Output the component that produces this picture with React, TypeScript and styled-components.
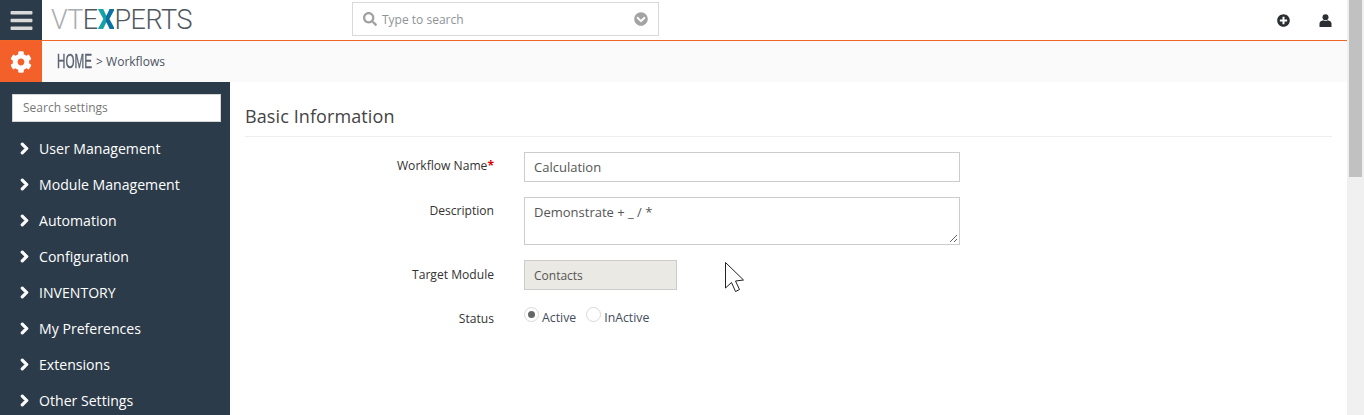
import React from "react";
import styled, { createGlobalStyle } from "styled-components";
import {
  FaBars,
  FaCog,
  FaChevronRight,
  FaSearch,
  FaChevronCircleDown,
  FaPlusCircle,
} from "react-icons/fa";

const GlobalStyle = createGlobalStyle`
  html, body {
    margin: 0;
    padding: 0;
    height: 415px;
    overflow: hidden;
    background: #fff;
    font-family: "Open Sans", "Liberation Sans", sans-serif;
    color: #333;
  }
  * { box-sizing: border-box; }
`;

const Page = styled.div`
  position: relative;
  display: flex;
  width: 1364px;
  height: 415px;
  overflow: hidden;
`;
const Main = styled.div`
  flex: 1;
  display: flex;
  flex-direction: column;
  min-width: 0;
`;
const TopBar = styled.div`
  display: flex;
  align-items: center;
  height: 41px;
  flex: none;
  border-bottom: 1px solid #f26529;
  background: #fff;
`;
const MenuButton = styled.div`
  width: 42px;
  height: 40px;
  background: #2c3b49;
  color: #d9d9d9;
  display: flex;
  align-items: center;
  justify-content: center;
  font-size: 25px;
`;
const Logo = styled.div`
  width: 310px;
  padding-left: 9px;
  font-family: Roboto, "Liberation Sans", sans-serif;
  font-weight: 300;
  font-size: 27px;
  line-height: 38px;
  letter-spacing: -0.5px;
  color: #50585e;
  white-space: nowrap;
`;
const LogoLight = styled.span`
  color: #a9adb0;
`;
const LogoMark = styled.span`
  font-weight: 900;
  background: linear-gradient(90deg, #19a6a0 0%, #12a0a8 50%, #0b6fa0 52%, #0a73a5 100%);
  -webkit-background-clip: text;
  background-clip: text;
  color: transparent;
`;
const SearchBox = styled.div`
  width: 307px;
  height: 34px;
  margin-bottom: 3px;
  border: 1px solid #d9d9d9;
  display: flex;
  align-items: center;
  padding: 0 10px;
  color: #8e9398;
  font-size: 12px;
`;
const SearchIcon = styled(FaSearch)`
  font-size: 14px;
  color: #a0a0a0;
  margin-right: 5px;
`;
const SearchText = styled.span`
  flex: 1;
  padding-top: 1px;
`;
const CaretIcon = styled(FaChevronCircleDown)`
  font-size: 14px;
  color: #a3a3a3;
`;
const TopActions = styled.div`
  margin-left: auto;
  display: flex;
  align-items: center;
  gap: 29px;
  padding-right: 15px;
  color: #2b2f33;
  font-size: 13px;
`;
const UserGlyph = styled.svg`
  width: 13px;
  height: 13px;
  fill: currentColor;
`;
const CrumbBar = styled.div`
  display: flex;
  align-items: center;
  height: 41px;
  flex: none;
  background: #fafafa;
`;
const GearBox = styled.div`
  width: 42px;
  height: 41px;
  background: #f4602a;
  color: #fff;
  display: flex;
  align-items: center;
  justify-content: center;
  font-size: 22px;
`;
const Crumbs = styled.div`
  margin-left: 15px;
  display: flex;
  align-items: center;
  font-size: 12px;
  color: #4a5360;
`;
const HomeLink = styled.span`
  font-family: "Liberation Sans", sans-serif;
  font-size: 19.5px;
  color: #5b6372;
  -webkit-text-stroke: 0.4px #5b6372;
  transform: scaleX(0.6);
  transform-origin: left center;
  width: 36px;
  white-space: nowrap;
`;
const Body = styled.div`
  flex: 1;
  display: flex;
  min-height: 0;
`;
const Sidebar = styled.div`
  width: 230px;
  flex: none;
  background: #2c3b49;
  padding: 12px 9px 0 12px;
`;
const SideSearch = styled.div`
  height: 28px;
  background: #fff;
  border: 1px solid #d5d5d5;
  padding-left: 10px;
  line-height: 25px;
  font-size: 12px;
  color: #777;
  margin-bottom: 8px;
`;
const SideItem = styled.div`
  height: 36px;
  display: flex;
  align-items: center;
  margin-left: 8px;
  color: #fff;
  font-size: 14.1px;
  white-space: nowrap;
`;
const SideChevron = styled(FaChevronRight)`
  width: 9px;
  height: 13px;
  margin-right: 10px;
  stroke: currentColor;
  stroke-width: 45px;
`;
const Content = styled.div`
  flex: 1;
  padding: 20px 15px 0;
`;
const Heading = styled.div`
  height: 35px;
  line-height: 29px;
  font-size: 18px;
  letter-spacing: 0.1px;
  color: #444;
  border-bottom: 1px solid #eee;
  margin-bottom: 15px;
`;
const Row = styled.div<{ $mb?: number }>`
  display: flex;
  align-items: flex-start;
  margin-bottom: ${(p) => p.$mb ?? 15}px;
`;
const Label = styled.div<{ $top?: number }>`
  width: 249px;
  flex: none;
  text-align: right;
  font-size: 12.1px;
  color: #333;
  line-height: 17px;
  padding-top: ${(p) => p.$top ?? 5}px;
`;
const Required = styled.span`
  color: #e00000;
  font-weight: 700;
`;
const Field = styled.div<{ $w?: number; $h?: number; $off?: boolean }>`
  position: relative;
  margin-left: 30px;
  width: ${(p) => p.$w ?? 436}px;
  height: ${(p) => p.$h ?? 30}px;
  border: 1px solid #ccc;
  background: ${(p) => (p.$off ? "#eae9e3" : "#fff")};
  padding-left: 9px;
  line-height: 29px;
  font-size: ${(p) => (p.$off ? 12 : 13)}px;
  color: #555;
`;
const Grip = styled.svg`
  position: absolute;
  right: 1px;
  bottom: 1px;
`;
const Radios = styled.div`
  margin-left: 30px;
  display: flex;
  align-items: center;
  font-size: 12.3px;
  color: #444d5c;
  height: 20px;
  margin-top: 2px;
`;
const Radio = styled.span<{ $on?: boolean }>`
  position: relative;
  width: 15px;
  height: 15px;
  border-radius: 50%;
  border: 1px solid #d8d8d8;
  background: #fff;
  margin: 0 3px 6px 0;
  &::after {
    content: "";
    display: ${(p) => (p.$on ? "block" : "none")};
    position: absolute;
    left: 3px;
    top: 3px;
    width: 7px;
    height: 7px;
    border-radius: 50%;
    background: #666;
  }
`;
const RadioText = styled.span`
  margin-right: 10px;
`;
const Track = styled.div`
  width: 17px;
  flex: none;
  background: #f0f0f0;
  padding: 0 2px;
`;
const Thumb = styled.div`
  height: 177px;
  background: #c1c1c1;
`;
const Cursor = styled.svg`
  position: absolute;
  left: 725px;
  top: 262px;
`;

const items = [
  "User Management",
  "Module Management",
  "Automation",
  "Configuration",
  "INVENTORY",
  "My Preferences",
  "Extensions",
  "Other Settings",
];

export default function App() {
  return (
    <Page>
      <GlobalStyle />
      <Main>
        <TopBar>
          <MenuButton>
            <FaBars />
          </MenuButton>
          <Logo>
            <LogoLight>VT</LogoLight>E<LogoMark>X</LogoMark>PERTS
          </Logo>
          <SearchBox>
            <SearchIcon />
            <SearchText>Type to search</SearchText>
            <CaretIcon />
          </SearchBox>
          <TopActions>
            <FaPlusCircle />
            <UserGlyph viewBox="0 0 13 13">
              <circle cx="6.5" cy="3.2" r="3" />
              <path d="M0.5 13 V9.5 C0.5 7.5 2.5 6.6 4.2 6.2 C5.5 7.2 7.5 7.2 8.8 6.2 C10.5 6.6 12.5 7.5 12.5 9.5 V13 Z" />
            </UserGlyph>
          </TopActions>
        </TopBar>
        <CrumbBar>
          <GearBox>
            <FaCog />
          </GearBox>
          <Crumbs>
            <HomeLink>HOME</HomeLink>
            &nbsp;&gt; Workflows
          </Crumbs>
        </CrumbBar>
        <Body>
          <Sidebar>
            <SideSearch>Search settings</SideSearch>
            {items.map((item) => (
              <SideItem key={item}>
                <SideChevron />
                {item}
              </SideItem>
            ))}
          </Sidebar>
          <Content>
            <Heading>Basic Information</Heading>
            <Row>
              <Label>
                Workflow Name<Required>*</Required>
              </Label>
              <Field>Calculation</Field>
            </Row>
            <Row>
              <Label>Description</Label>
              <Field $h={48}>
                Demonstrate + _ / *
                <Grip width="10" height="10" viewBox="0 0 10 10">
                  <path d="M9 2 L2 9 M9 6 L6 9" stroke="#666" strokeWidth="1" fill="none" />
                </Grip>
              </Field>
            </Row>
            <Row>
              <Label $top={6}>Target Module</Label>
              <Field $w={153} $off>
                Contacts
              </Field>
            </Row>
            <Row $mb={0}>
              <Label>Status</Label>
              <Radios>
                <Radio $on />
                <RadioText>Active</RadioText>
                <Radio />
                <RadioText>InActive</RadioText>
              </Radios>
            </Row>
          </Content>
        </Body>
      </Main>
      <Track>
        <Thumb />
      </Track>
      <Cursor width="20" height="31" viewBox="0 0 20 31">
        <path
          d="M.5 .5 V26 L6.5 20.5 L10.5 29.5 L14.5 27.5 L10.5 19 L18.5 18 Z"
          fill="#fff"
          stroke="#222"
          strokeWidth="1"
        />
      </Cursor>
    </Page>
  );
}
